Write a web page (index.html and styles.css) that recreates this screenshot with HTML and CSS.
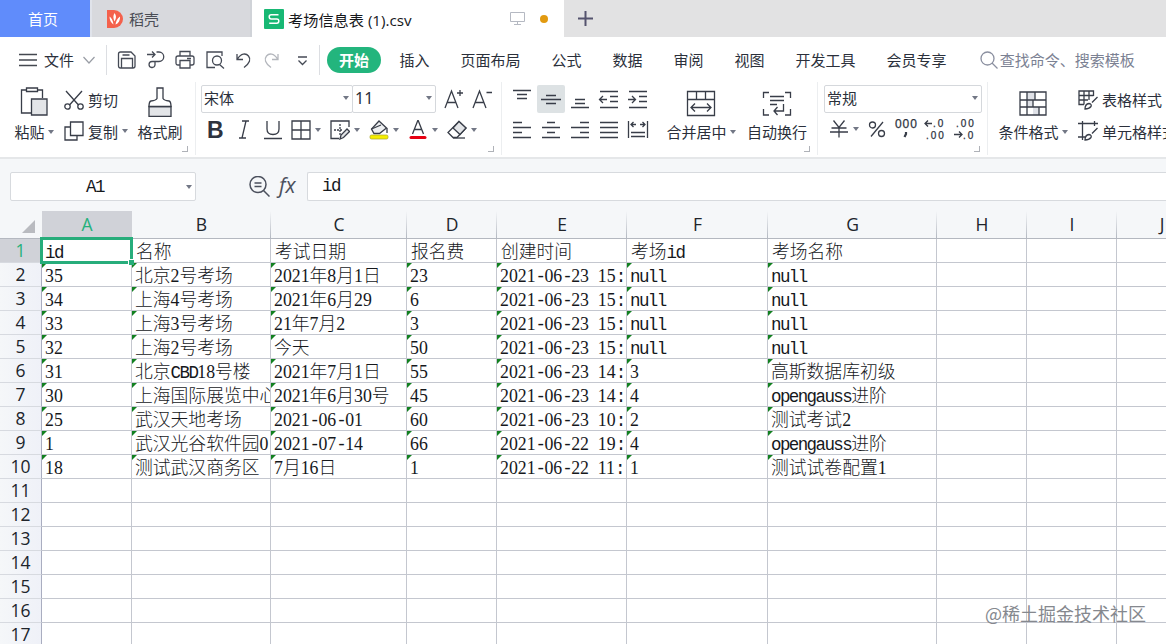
FILE: index.html
```html
<!DOCTYPE html>
<html lang="zh-CN">
<head>
<meta charset="utf-8">
<title>考场信息表 (1).csv</title>
<link rel="stylesheet" href="styles.css">
</head>
<body>
<div class="app">
  <header class="tabs">
    <div class="tab home">首页</div>
    <div class="tab docer">
      <svg width="16" height="18" viewBox="0 0 16 18"><path d="M0 0h7a9 9 0 0 1 0 18H0z" fill="#f4614c"/><path d="M7.500 3c2 2.500 2 5 0 8.500C6 8 6 5.500 7.500 3zM2.500 6.500c2 1.500 3.500 4 4 8C4 13 2.500 10 2.500 6.500zM13 6.500c.2 4-1.500 7-4.500 8C9 11.500 10 8.500 13 6.500z" fill="#fff"/></svg>
      <span>稻壳</span>
    </div>
    <div class="tab file">
      <svg width="20" height="20" viewBox="0 0 20 20"><rect width="20" height="20" rx="1" fill="#18b874"/><path d="M14.500 5.700H7.200q-2 0-2 2.100t2 2.100h5.600q2 0 2 2.200t-2 2.200H5.200" fill="none" stroke="#fff" stroke-width="1.500"/></svg>
      <span class="file-name">考场信息表 (1).csv</span>
      <svg class="monitor" width="15" height="15" viewBox="0 0 15 15" fill="none" stroke="#b5b9c2"><path d="M.5 1.500h14v9H.5zM7.500 10.500v3M4 13.500h7"/></svg>
      <i class="dot"></i>
    </div>
    <div class="add"><svg width="15" height="15" viewBox="0 0 15 15"><path d="M7.500 0v15M0 7.500h15" stroke="#54536e" stroke-width="2"/></svg></div>
  </header>

  <nav class="menu">
    <div class="file-menu">
      <svg width="18" height="14" viewBox="0 0 18 14" stroke="#444850" stroke-width="1.300"><path d="M0 1.500h18M0 7h18M0 12.500h18"/></svg>
      <span>文件</span>
      <svg width="12" height="8" viewBox="0 0 12 8" fill="none" stroke="#999da5" stroke-width="1.200"><path d="M.5 1 6 7l5.500-6"/></svg>
    </div>
    <div class="quick">
      <svg width="20" height="20" viewBox="0 0 20 20"><path d="M3.500 2H14l4 4v10q0 2-2 2H3.500q-2 0-2-2V4q0-2 2-2zM4.500 18V8.500h11V18M5.500 5h7"/></svg>
      <svg width="20" height="20" viewBox="0 0 20 20"><path d="M1 4.500h8M6 1.500l3 3-3 3M9 11.500V15a3 3 0 1 1-3-3.500h7a4.700 4.700 0 0 0 0-9.500h-2.500"/></svg>
      <svg width="20" height="20" viewBox="0 0 20 20"><path d="M5 6V1.500h10V6M5 15H3q-2 0-2-2V8q0-2 2-2h14q2 0 2 2v5q0 2-2 2h-2M5 10.500h10v7.500H5zM12 8.500h4"/></svg>
      <svg width="20" height="20" viewBox="0 0 20 20"><path d="M17 6V2H2v15.500h8M14.500 14.500l4.500 4"/><circle cx="12" cy="10.500" r="4.500"/></svg>
      <svg width="20" height="20" viewBox="0 0 20 20"><path d="M3 4v5.500h6M3.500 9C7 3 12 3 14.500 6s1.500 7-4.500 11.500"/></svg>
      <svg class="dim" width="20" height="20" viewBox="0 0 20 20"><path d="M15 4v5.500H9M14.500 9C11 3 6 3 3.500 6s-1.500 7 4.500 11.500"/></svg>
      <svg width="20" height="20" viewBox="0 0 20 20"><path d="M6 7h9M6.500 10.500l4 4 4-4"/></svg>
    </div>
    <div class="menu-items">
      <span class="active">开始</span><span>插入</span><span>页面布局</span><span>公式</span><span>数据</span><span>审阅</span><span>视图</span><span>开发工具</span><span>会员专享</span>
    </div>
    <div class="search">
      <svg width="18" height="18" viewBox="0 0 18 18" fill="none" stroke="#8b90a0" stroke-width="1.300"><circle cx="7.500" cy="7.500" r="6.500"/><path d="M12 12l5.500 5.500"/></svg>
      <span>查找命令、搜索模板</span>
    </div>
  </nav>

  <section class="ribbon">
    <div class="group clipboard">
      <div class="big paste">
        <svg width="30" height="32" viewBox="0 0 30 32"><path d="M8 5H2.500v23H12M19 5h4.500v8M7.500 3h11v3.500h-11z"/><path d="M12.500 14H28v16H12.500z" fill="#e3e5e8"/></svg>
        <span>粘贴<i class="caret"></i></span>
      </div>
      <div class="pair">
        <div><svg width="20" height="20" viewBox="0 0 20 20"><path d="M2 1l12.500 14M18 1L5.500 15"/><circle cx="3.500" cy="16.500" r="2.700"/><circle cx="16.500" cy="16.500" r="2.700"/></svg>剪切</div>
        <div><svg width="20" height="20" viewBox="0 0 20 20"><path d="M6 6H1v13h12v-4M6.500 1H19v13.500H6.500z"/></svg>复制<i class="caret"></i></div>
      </div>
      <div class="big painter">
        <svg width="24" height="32" viewBox="0 0 24 32"><path d="M1 21.500h22v10H1z" fill="#e3e5e8"/><path d="M9 3h6v10.500q1 2 6 2.500 2 .5 2 5.500H1q0-5 2-5.500 5-.5 6-2.500z" fill="#fff"/></svg>
        <span>格式刷</span>
      </div>
      <b class="corner"></b>
    </div>

    <div class="group font">
      <div class="line">
        <div class="select family">宋体<i class="caret"></i></div>
        <div class="select size">11<i class="caret"></i></div>
        <svg class="grow" width="20" height="22" viewBox="0 0 20 22"><path d="M1 20 7.500 3 14 20M3.500 14.500h8M13 5h6M16 2v6"/></svg>
        <svg class="shrink" width="22" height="22" viewBox="0 0 22 22"><path d="M1 20 7.500 3 14 20M3.500 14.500h8M14.500 4.500H20"/></svg>
      </div>
      <div class="line tools">
        <div class="cell bold">B</div>
        <div class="cell"><svg width="14" height="20" viewBox="0 0 14 20"><path d="M5 1h7M2 18h7M9 1 5 18"/></svg></div>
        <div class="cell"><svg width="20" height="20" viewBox="0 0 20 20"><path d="M4 1v8q0 5.500 6 5.500T16 9V1M1 18.500h18"/></svg></div>
        <div class="drop"><svg width="20" height="20" viewBox="0 0 20 20"><path d="M1 1h18v18H1zM10 1v18M1 10h18"/></svg><i class="caret"></i></div>
        <div class="drop"><svg width="20" height="20" viewBox="0 0 20 20"><path d="M19 7V1H1v17.500h8"/><path d="M10 4v11M4 10h9" stroke-dasharray="2 1"/><path d="m10 19 1-4 6-6 2.500 2.500-6 6z" fill="#e3e5e8"/></svg><i class="caret"></i></div>
        <div class="drop"><svg width="20" height="20" viewBox="0 0 20 20"><path d="m10 1 7.500 7-7 5.500H5L2.500 9z" fill="#eef0f2"/><path d="M2.500 9 12 5M18 8v5"/><rect x="1" y="15" width="18" height="4" rx="1.500" fill="#f5ee00" stroke="#aaa52a" stroke-width=".7"/></svg><i class="caret"></i></div>
        <div class="drop"><svg width="20" height="20" viewBox="0 0 20 20"><path d="M4.500 14 10 0l5.500 14M6.500 9.500h7"/><rect x="1.500" y="16" width="17" height="3" rx="1.500" fill="#e60012" stroke="none"/></svg><i class="caret"></i></div>
        <div class="drop"><svg width="20" height="20" viewBox="0 0 20 20"><path d="M12 1.500 19 8l-9 9.500H6L1 12.500z" fill="#fff"/><path d="M12 1.500 19 8l-6 6.500L6 8z" fill="#e3e5e8"/><path d="M6 18h12"/></svg><i class="caret"></i></div>
      </div>
      <b class="corner"></b>
    </div>

    <div class="group align">
      <div class="align-grid">
        <svg viewBox="0 0 28 28"><path d="M5 5.500h18M9 9.500h10M9 13.500h10"/></svg>
        <svg class="on" viewBox="0 0 28 28"><path d="M9 10.500h10M4 14.500h20M9 18.500h10"/></svg>
        <svg viewBox="0 0 28 28"><path d="M9 14.500h10M9 18.500h10M5 22.500h18"/></svg>
        <svg viewBox="0 0 28 28"><path d="M5 6.500h18M15 11.500h8M15 16.500h8M5 22.500h18M4.500 14.500H12M8 11l-3.500 3.500L8 18"/></svg>
        <svg viewBox="0 0 28 28"><path d="M5 6.500h18M15 11.500h8M15 16.500h8M5 22.500h18M4 14.500h7.500M8 11l3.500 3.500L8 18"/></svg>
        <svg viewBox="0 0 28 28"><path d="M5 6.500h9M5 11.500h18M5 16.500h9M5 21.500h18"/></svg>
        <svg viewBox="0 0 28 28"><path d="M10 6.500h8M5 11.500h18M10 16.500h8M5 21.500h18"/></svg>
        <svg viewBox="0 0 28 28"><path d="M14 6.500h9M5 11.500h18M14 16.500h9M5 21.500h18"/></svg>
        <svg viewBox="0 0 28 28"><path d="M5 6.500h18M5 11.500h18M5 16.500h18M5 21.500h18"/></svg>
        <svg viewBox="0 0 28 28"><path d="M4.500 5v17M23.500 5v17M7 16.500h14M7 20.500h14M7 8.500h5M16 8.500h5M9.500 6 7 8.500 9.500 11M18.500 6 21 8.500 18.500 11"/></svg>
      </div>
      <div class="big merge">
        <svg width="30" height="28" viewBox="0 0 30 28"><path d="M1.500 1.500h27v24h-27zM1.500 9.500h27M10.500 1.500v8M19.500 1.500v8M5 17.500h20M9 13.500l-4 4 4 4M21 13.500l4 4-4 4"/></svg>
        <span>合并居中<i class="caret"></i></span>
      </div>
      <div class="big wrap">
        <svg width="30" height="28" viewBox="0 0 30 28"><path d="M7 2.500H1.500V8M23 2.500h5.500V8M1.500 19v6H7M28.500 19v6H23M8 6.500h14M8 10.500h14M8 14.500h7M21.500 14v7H12M15.500 17 12 21l3.500 4"/></svg>
        <span>自动换行</span>
      </div>
      <b class="corner"></b>
    </div>

    <div class="group number">
      <div class="select format">常规<i class="caret"></i></div>
      <div class="line numtools">
        <svg class="yen" width="18" height="20" viewBox="0 0 18 20"><path d="M3.500 1.500 9 8.500l5.500-7M1.500 9h15M0 13h18M9 8.500v10"/></svg><i class="caret"></i>
        <svg class="percent" width="18" height="20" viewBox="0 0 18 20"><circle cx="4.500" cy="6" r="3"/><circle cx="13.500" cy="14.500" r="3"/><path d="M15 3 3 17.500"/></svg>
        <svg class="thousand" width="24" height="24" viewBox="0 0 24 24"><text x="1" y="11">000</text><path d="M12 15v2l-1.500 3" stroke-width="2.200"/></svg>
        <svg class="dec" width="22" height="24" viewBox="0 0 22 24"><path d="M1 6.500h7M4 3.500l-3 3 3 3"/><text x="9" y="10">.0</text><text x="2" y="22">.00</text></svg>
        <svg class="dec" width="22" height="24" viewBox="0 0 22 24"><text x="2" y="10">.00</text><path d="M0 17.500h8M5 14.500l3 3-3 3"/><text x="9" y="22">.0</text></svg>
      </div>
      <b class="corner"></b>
    </div>

    <div class="group styles">
      <div class="big cond">
        <svg width="28" height="28" viewBox="0 0 28 28"><path d="M8 2h8v8H8zM8 10h6v7H8zM14 17h6v8h-6z" fill="#dfe1e7" stroke="none"/><path d="M1 2h26v23H1zM8 2v23M16 2v8M1 10h26M1 17h26M14 10v7M20 17v8"/></svg>
        <span>条件格式<i class="caret"></i></span>
      </div>
      <div class="pair">
        <div><svg width="20" height="20" viewBox="0 0 20 20"><path d="M15.500 6V1H1v13.500h5M6 1v13.500M11 1v9M1 5.500h14.500M1 10h9"/><path d="M19.500 7 14 12.500M7 19q0-5 4-5.500 3 .5 2 3-2 2.500-6 2.500z" fill="#fff"/></svg>表格样式</div>
        <div><svg width="20" height="20" viewBox="0 0 20 20"><path d="M0 2.500h20M4.500 0v19M0 16h7M16.500 0v5"/><path d="M19.500 7 14 12.500M7 19q0-5 4-5.500 3 .5 2 3-2 2.500-6 2.500z" fill="#fff"/></svg>单元格样式</div>
      </div>
    </div>
  </section>

  <section class="formula">
    <div class="namebox"><span class="mono">A1</span><i class="caret"></i></div>
    <svg class="lens" width="21" height="21" viewBox="0 0 21 21" fill="none" stroke="#4b505d" stroke-width="1.500"><circle cx="9" cy="8.500" r="8"/><path d="M5.500 7h7M5.500 10.500h7M14.500 14.500l6 6"/></svg>
    <span class="fx">fx</span>
    <div class="input"><span class="mono">id</span></div>
  </section>

  <main class="sheet" id="sheet"></main>
  <div class="watermark">@稀土掘金技术社区</div>
</div>
<script src="sheet.js"></script>
</body>
</html>
```
FILE: styles.css
```css
*, *::before, *::after { box-sizing: border-box; }
body { margin: 0; font-family: "Noto Sans", "Noto Sans CJK SC", sans-serif; font-size: 15px; color: #2b303b; }
svg { display: block; flex: none; }
.app { position: relative; width: 1166px; height: 644px; overflow: hidden; background: #fff; display: flex; flex-direction: column; }

.tabs { height: 37px; flex: none; display: flex; background: #e2e2e3; font-family: "Noto Sans CJK SC", sans-serif; }
.tab { display: flex; align-items: center; height: 37px; }
.home { width: 90px; padding-left: 28px; background: #608cfb; color: #fff; }
.docer { width: 162px; padding-left: 15px; gap: 6px; background: #d8d9dd; color: #4a4d55; border-right: 2px solid #d0d3d8; border-left: 2px solid #e0e3ea; }
.file { width: 312px; padding-left: 12px; background: #fff; color: #16181c; }
.file-name { margin-left: 4px; width: 127px; white-space: nowrap; font-family: "Open Sans", "Noto Sans CJK SC", sans-serif; font-size: 15.200px; }
.monitor { margin-left: 95px; }
.dot { width: 8px; height: 8px; border-radius: 50%; background: #e29a10; margin-left: 15px; }
.add { padding: 11px 0 0 14px; }

.menu { height: 45px; flex: none; display: flex; align-items: center; font-family: "Noto Sans CJK SC", sans-serif; }
.file-menu { display: flex; align-items: center; width: 107px; height: 30px; padding-left: 19px; border-right: 1px solid #dcdee2; gap: 7px; }
.file-menu svg:last-child { margin-left: 2px; }
.quick { display: flex; gap: 9.200px; width: 213px; height: 30px; align-items: center; padding-left: 10px; border-right: 1px solid #dcdee2; }
.quick svg { fill: none; stroke: #454a55; stroke-width: 1.300; }
.quick .dim { stroke: #b4b7bd; }
.menu-items { display: flex; align-items: center; padding-left: 7px; gap: 31px; white-space: nowrap; }
.menu-items .active { width: 54px; height: 26px; line-height: 25px; border-radius: 13px; text-align: center; color: #fff; background: #23b57d; font-weight: 700; margin-right: -12.500px; }
.search { display: flex; align-items: center; gap: 2px; margin-left: 33px; color: #7b8193; white-space: nowrap; }

.ribbon { height: 75px; flex: none; display: flex; font-family: "Noto Sans CJK SC", sans-serif; background: #fff; }
.ribbon svg { fill: none; stroke: #383d48; stroke-width: 1.300; }
.group { position: relative; height: 73px; border-right: 1px solid #eceef0; padding-top: 3px; flex: none; }
.corner { position: absolute; right: 7px; bottom: 3px; width: 6px; height: 6px; border: solid #afb2b8; border-width: 0 1.500px 1.500px 0; }
.caret { display: inline-block; width: 0; height: 0; border: 3.500px solid transparent; border-top: 4px solid #727785; border-bottom: 0; flex: none; }
.big { display: flex; flex-direction: column; align-items: center; flex: none; }
.big span { display: flex; align-items: center; gap: 3px; height: 22px; line-height: 22px; white-space: nowrap; }
.big > svg { margin-bottom: 4px; }
.pair { display: flex; flex-direction: column; }
.pair div { height: 31px; display: flex; align-items: center; gap: 4px; white-space: nowrap; }
.pair div:first-child { padding-bottom: 2px; }
.pair div:last-child { padding-bottom: 1px; }
.clipboard { width: 196px; display: flex; }
.paste { width: 52px; margin-left: 8px; }
.clipboard .pair { margin-left: 4px; width: 70px; }
.painter { width: 50px; margin-left: 1px; }
.font { width: 306px; padding-left: 5px; }
.line { display: flex; align-items: center; }
.select { display: flex; align-items: center; justify-content: space-between; height: 28px; border: 1px solid #d5d8dc; padding: 0 3px 0 2px; border-radius: 2px; line-height: 24px; padding-bottom: 2px; }
.family { width: 152px; }
.size { width: 84px; margin-left: -1px; font-family: "Noto Sans", sans-serif; font-size: 16px; }
.grow, .shrink { margin-left: 8px; }
.tools { height: 34px; }
.cell { width: 28.700px; display: flex; justify-content: center; }
.bold { font: 700 23px/32px "Liberation Sans", sans-serif; color: #2e333e; }
.drop { width: 39px; display: flex; align-items: center; gap: 4px; padding-left: 4px; }
.align { width: 316px; padding-left: 6px; display: flex; }
.align-grid { display: grid; grid-template-columns: repeat(5, 29px); grid-auto-rows: 31px; height: 62px; }
.align-grid svg { width: 28px; height: 28px; }
.align-grid .on { background: #dde2e4; border-radius: 2px; }
.merge { width: 80px; margin-left: 8px; }
.merge > svg, .wrap > svg, .cond > svg { margin: 5px 0 3px; }
.wrap { width: 70px; margin-left: 1px; }
.number { width: 170px; padding-left: 6px; }
.format { width: 158px; }
.numtools { height: 32px; padding-left: 6px; }
.numtools svg { overflow: visible; }
.numtools .caret { margin-left: 5px; }
.percent { margin-left: 9px; }
.thousand { margin-left: 8px; }
.dec { margin-left: 6px; }
.dec + .dec { margin-left: 8px; }
.numtools text { font: 10px "Liberation Sans", sans-serif; letter-spacing: 1.900px; fill: #2e333e; stroke: #2e333e; stroke-width: .25; }
.thousand text { font-size: 12px; letter-spacing: .900px; }
.styles { border: 0; display: flex; width: 178px; overflow: hidden; }
.cond { width: 80px; margin-left: 5px; }
.styles .pair { margin-left: 5px; }

.formula { height: 54px; flex: none; background: #f5f7f9; border-top: 2px solid #e5e7e9; display: flex; padding: 13px 0 0 10px; }
.namebox { width: 186px; height: 29px; border: 1px solid #d7dade; border-radius: 2px; background: #fff; display: flex; align-items: center; padding: 1px 3px 0 75px; justify-content: space-between; }
.lens { margin: 4px 0 0 53px; }
.fx { width: 37px; padding-left: 9px; font: italic 21px/27px "Open Sans", sans-serif; color: #4b505d; }
.input { flex: 1; height: 29px; border: 1px solid #d7dade; border-right: 0; border-radius: 2px 0 0 2px; background: #fff; padding-left: 14px; line-height: 25px; }

.mono { font-family: "Liberation Mono", monospace; font-size: 17.500px; letter-spacing: -1.600px; color: #16181c; }
.num { font-family: "Liberation Serif", serif; font-size: 17.800px; }
.sheet { height: 433px; flex: none; display: grid; grid-template-columns: 42px 90px 139px 136px 90px 130px 141px 169px 90px 90px 90px; grid-template-rows: 28px; grid-auto-rows: 24px; overflow: hidden; font-size: 17.800px; line-height: 23px; color: #16181c; }
.sheet > div { overflow: hidden; white-space: nowrap; }
.colhead { background: linear-gradient(#f5f7f9, #f5f7f9) 0 0 / calc(100% - 1px) 100% no-repeat, linear-gradient(#f5f7f9, #b3b8c1); border-bottom: 1px solid #b4b8c0; text-align: center; font-family: "Open Sans", sans-serif; font-size: 17.500px; line-height: 26px; color: #20242b; }
.colhead.sel { background: #d0d2d8; color: #25b17b; }
.rowhead { background: linear-gradient(90deg, #f5f7f9, #eff1f8); border-right: 1px solid #a9adc0; border-bottom: 1px solid #d7dae0; text-align: center; font-family: "Open Sans", sans-serif; font-size: 17.500px; line-height: 23px; color: #20242b; }
.rowhead.sel { background: #d0d2d8; color: #25b17b; }
.select-all { background: #f5f7f9; border-bottom: 1px solid #b4b8c0; padding: 9px 0 0 22px; }
.data { position: relative; border-right: 1px solid #c4c7cf; border-bottom: 1px solid #c4c7cf; padding-left: 4px; font-family: "Noto Sans CJK SC", sans-serif; font-weight: 300; }
.data.text { padding-left: 3px; }
.data.text::before { content: ""; position: absolute; left: 0; top: 0; border-top: 5px solid #128020; border-right: 5px solid transparent; }
.sheet > .current { overflow: visible; z-index: 1; padding-left: 3px; }
.current::after { content: ""; position: absolute; left: -2px; top: -2px; width: 93px; height: 27px; border: 3px solid #27ad7b; }
.handle { position: absolute; right: -3px; bottom: -3px; width: 6px; height: 6px; background: #27ad7b; border: solid #fff; border-width: 1px 0 0 1px; z-index: 2; }
.watermark { position: absolute; left: 985px; top: 600px; font-family: "Noto Sans CJK SC", sans-serif; font-size: 18px; line-height: 26px; color: #85888e; font-weight: 400; white-space: nowrap; }
```
FILE: sheet.js
```js
const rows = [
  ["id", "名称", "考试日期", "报名费", "创建时间", "考场id", "考场名称"],
  ["35", "北京2号考场", "2021年8月1日", "23", "2021-06-23 15:", "null", "null"],
  ["34", "上海4号考场", "2021年6月29", "6", "2021-06-23 15:", "null", "null"],
  ["33", "上海3号考场", "21年7月2", "3", "2021-06-23 15:", "null", "null"],
  ["32", "上海2号考场", "今天", "50", "2021-06-23 15:", "null", "null"],
  ["31", "北京CBD18号楼", "2021年7月1日", "55", "2021-06-23 14:", "3", "高斯数据库初级"],
  ["30", "上海国际展览中心", "2021年6月30号", "45", "2021-06-23 14:", "4", "opengauss进阶"],
  ["25", "武汉天地考场", "2021-06-01", "60", "2021-06-23 10:", "2", "测试考试2"],
  ["1", "武汉光谷软件园0", "2021-07-14", "66", "2021-06-22 19:", "4", "opengauss进阶"],
  ["18", "测试武汉商务区", "7月16日", "1", "2021-06-22 11:", "1", "测试试卷配置1"]
];
const sheet = document.getElementById("sheet");

function add(className, html) {
  const el = document.createElement("div");
  el.className = className;
  el.innerHTML = html;
  sheet.append(el);
  return el;
}

// Half-width characters get their own runs so that two of them fill one full-width cell.
function runs(text) {
  return text.replace(/\d+|[A-Za-z:\- ]+/g, s => `<span class="${/\d/.test(s) ? "num" : "mono"}">${s}</span>`);
}

add("select-all", '<svg width="13" height="13"><path d="M13 0v13H0z" fill="#b9bbc0"/></svg>');
[..."ABCDEFGHIJ"].forEach((c, i) => add("colhead" + (i ? "" : " sel"), c));
for (let r = 0; r < 17; r++) {
  add("rowhead" + (r ? "" : " sel"), r + 1);
  for (let c = 0; c < 10; c++) {
    const value = rows[r] && rows[r][c];
    const current = r === 0 && c === 0;
    add("data" + (value && r ? " text" : "") + (current ? " current" : ""), (value ? runs(value) : "") + (current ? '<b class="handle"></b>' : ""));
  }
}
```
